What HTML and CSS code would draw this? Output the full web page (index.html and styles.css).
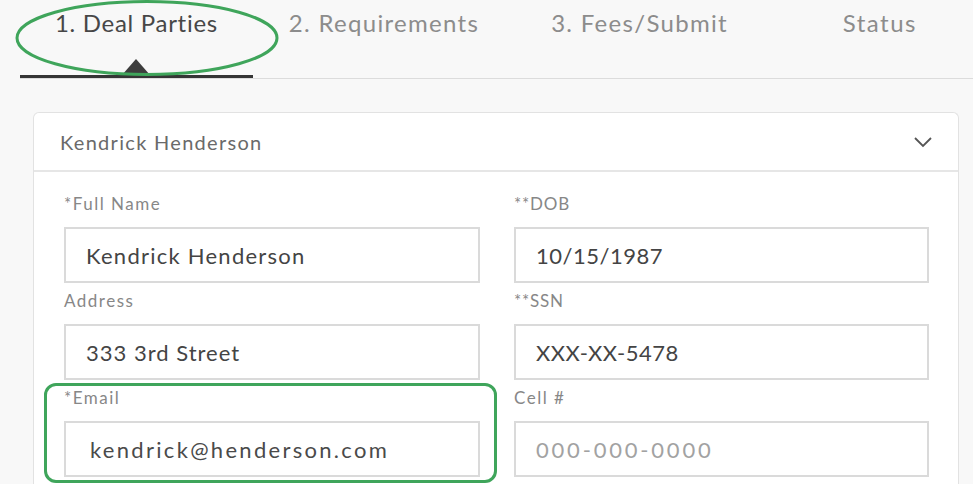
FILE: index.html
```html
<!DOCTYPE html>
<html lang="en">
<head>
<meta charset="utf-8">
<title>Deal Parties</title>
<link rel="stylesheet" href="styles.css">
</head>
<body>
<div class="page">
  <nav class="tabs">
    <div class="tab tab-active">1. Deal Parties
      <span class="tab-caret"></span>
      <svg class="tab-ring" width="268" height="80" viewBox="0 0 268 80"><ellipse cx="132" cy="38" rx="130" ry="36.5" fill="none" stroke="#3fa55b" stroke-width="3"/></svg>
    </div>
    <div class="tab">2. Requirements</div>
    <div class="tab">3. Fees/Submit</div>
    <div class="tab tab-status">Status</div>
  </nav>

  <section class="card">
    <header class="card-head">
      <span>Kendrick Henderson</span>
      <svg class="chev" width="20" height="12" viewBox="0 0 20 12"><polyline points="2,2 10,10 18,2" fill="none" stroke="#555" stroke-width="1.8"/></svg>
    </header>
    <div class="card-body">
      <div class="field">
        <label class="lbl">*Full Name</label>
        <div class="inp inp-name">Kendrick Henderson</div>
      </div>
      <div class="field">
        <label class="lbl lbl-caps">**DOB</label>
        <div class="inp inp-num">10/15/1987</div>
      </div>
      <div class="field">
        <label class="lbl">Address</label>
        <div class="inp inp-addr">333 3rd Street</div>
      </div>
      <div class="field">
        <label class="lbl lbl-caps">**SSN</label>
        <div class="inp inp-num">XXX-XX-5478</div>
      </div>
      <div class="field field-hl">
        <label class="lbl">*Email</label>
        <div class="inp inp-email">kendrick@henderson.com</div>
      </div>
      <div class="field">
        <label class="lbl">Cell #</label>
        <div class="inp inp-ph">000-000-0000</div>
      </div>
    </div>
  </section>
</div>
</body>
</html>
```

FILE: styles.css
```css
html, body {
  margin: 0;
  padding: 0;
  background: #f8f8f8;
  font-family: Lato, "Open Sans", "Liberation Sans", sans-serif;
  overflow: hidden;
}

.page {
  width: 973px;
  height: 484px;
  display: flex;
  flex-direction: column;
  overflow: hidden;
}

.tabs {
  display: flex;
  flex: none;
  margin-left: 20px;
  border-bottom: 1px solid #dcdcdc;
  height: 78px;
}

.tab {
  position: relative;
  padding: 8px 36px 0;
  font-size: 24px;
  line-height: 30px;
  letter-spacing: 1.3px;
  color: #8c8c8c;
  box-sizing: border-box;
  height: 78px;
  white-space: nowrap;
}

.tab-active {
  padding: 8px 35px 0;
  letter-spacing: 0.7px;
  color: #474747;
  border-bottom: 3px solid #353535;
}

.tab-status {
  margin-left: auto;
  padding-right: 56px;
  letter-spacing: 1.5px;
}

.tab-caret {
  position: absolute;
  left: 102px;
  bottom: 0;
  width: 0;
  height: 0;
  border-left: 14px solid transparent;
  border-right: 14px solid transparent;
  border-bottom: 16px solid #3d3d3d;
}

.tab-ring {
  position: absolute;
  left: -5px;
  top: 0;
}

.card {
  flex: 1;
  min-height: 0;
  margin: 33px 14px 0 33px;
  background: #fff;
  border: 1px solid #e2e2e2;
  border-bottom: none;
  border-radius: 6px 6px 0 0;
}

.card-head {
  display: flex;
  align-items: center;
  justify-content: space-between;
  height: 57px;
  padding: 0 25px 0 26px;
  border-bottom: 2px solid #e6e6e6;
  border-radius: 6px 6px 0 0;
  font-size: 20px;
  letter-spacing: 1.3px;
  color: #6a6a6a;
}

.chev {
  display: block;
}

.card-body {
  display: grid;
  grid-template-columns: 416px 415px;
  column-gap: 34px;
  row-gap: 8px;
  padding: 22px 29px 0 30px;
}

.field {
  display: flex;
  flex-direction: column;
  position: relative;
}

.lbl {
  font-size: 17px;
  line-height: 20px;
  height: 20px;
  margin-bottom: 13px;
  letter-spacing: 1.5px;
  color: #878787;
}

.lbl-caps {
  letter-spacing: 0.8px;
}

.inp {
  height: 56px;
  box-sizing: border-box;
  border: 2px solid #dadada;
  background: #fff;
  padding-left: 20px;
  display: flex;
  align-items: center;
  font-size: 22px;
  color: #444;
}

.inp-name {
  letter-spacing: 1.25px;
}

.inp-addr {
  letter-spacing: 1px;
}

.inp-num {
  letter-spacing: 0.5px;
}

.inp-email {
  padding-left: 24px;
  letter-spacing: 2.3px;
  color: #4a4a4a;
}

.inp-ph {
  letter-spacing: 2.8px;
  color: #a2a2a2;
}

.field-hl::before {
  content: "";
  position: absolute;
  top: -5px;
  left: -20px;
  right: -17px;
  bottom: -6px;
  border: 3px solid #3fa55b;
  border-radius: 12px;
  pointer-events: none;
}
```
